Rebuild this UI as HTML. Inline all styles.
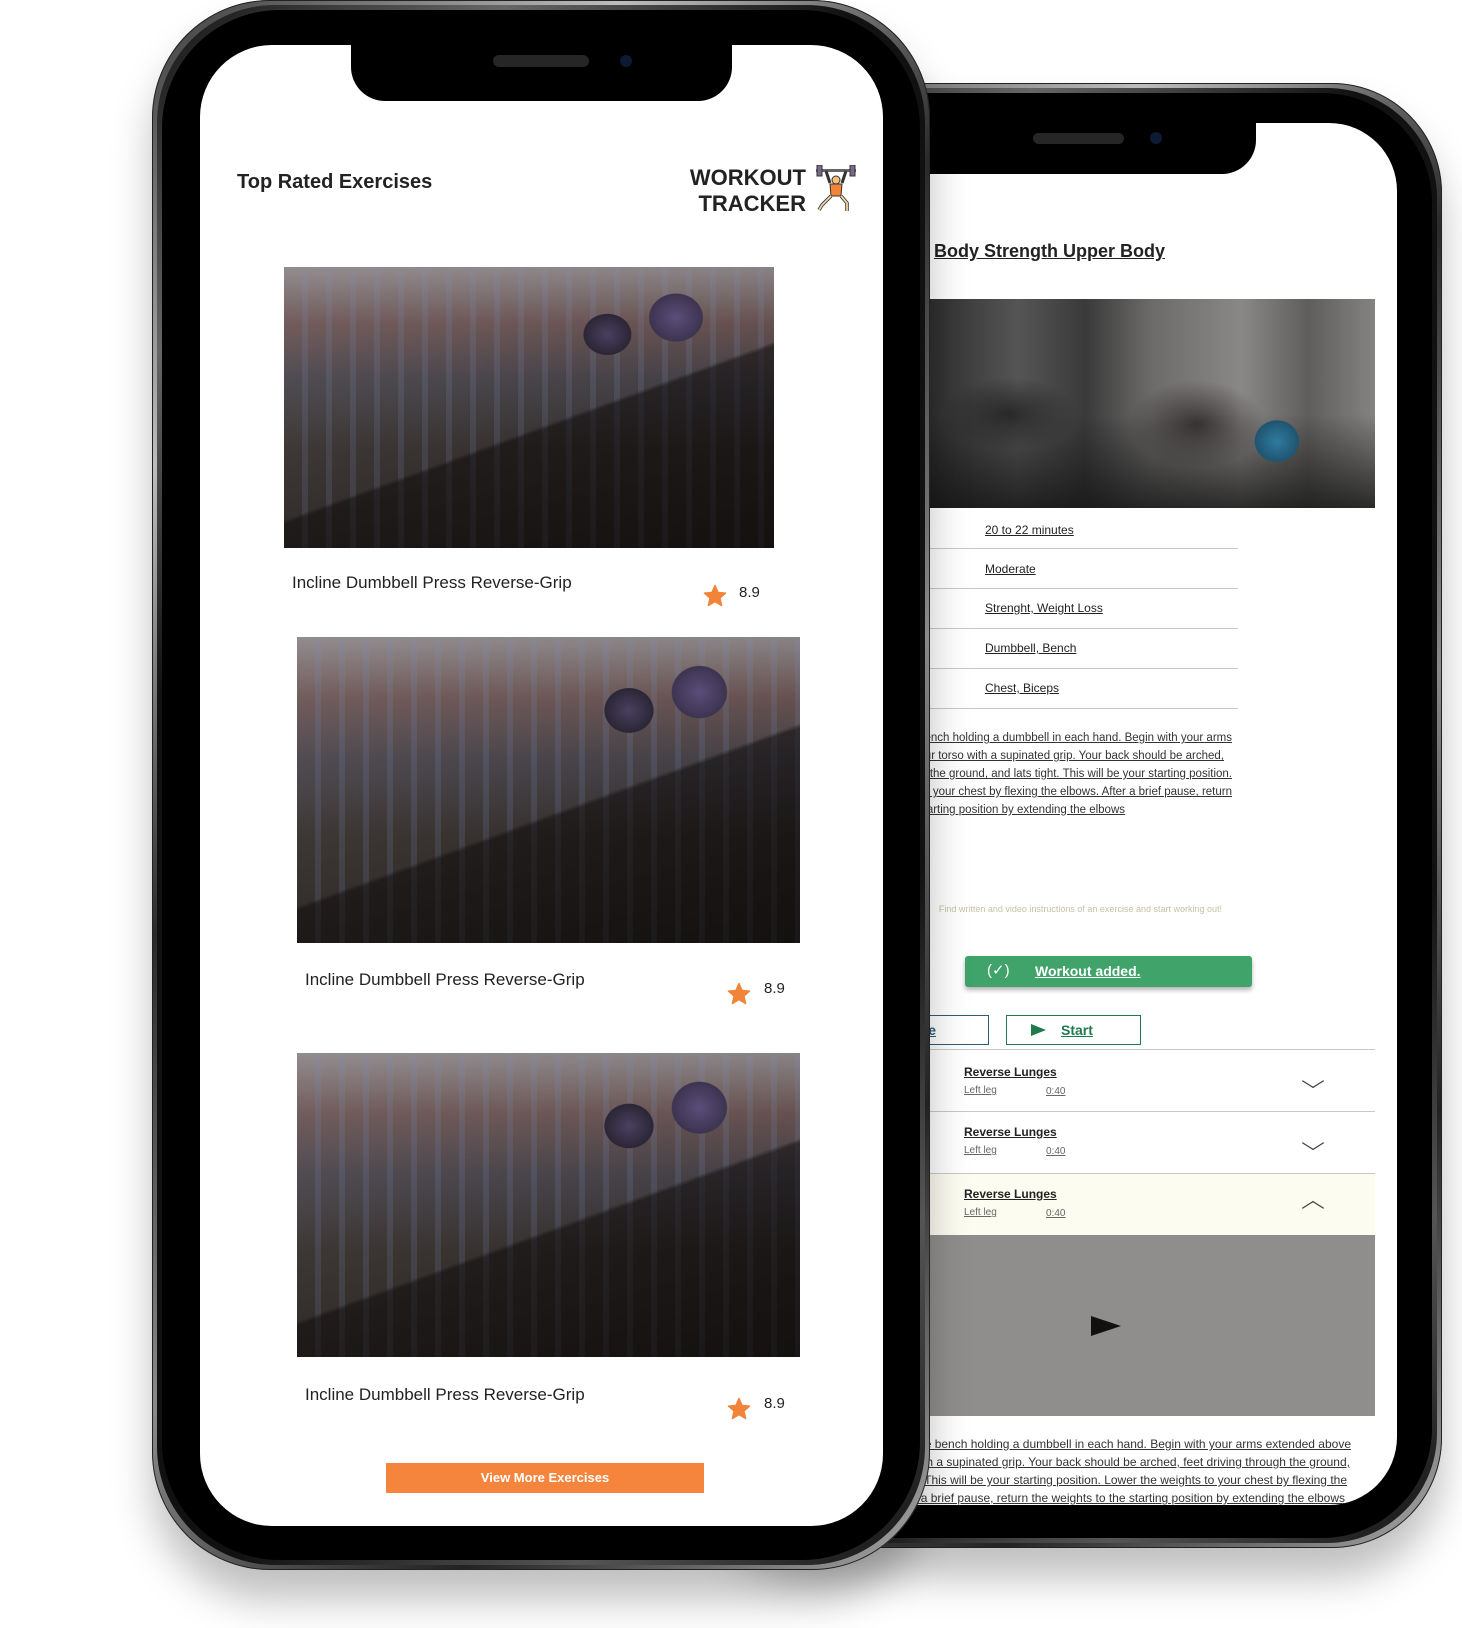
<!DOCTYPE html>
<html><head><meta charset="utf-8"><style>
*{margin:0;padding:0;box-sizing:border-box}
body{width:1462px;height:1628px;background:#fff;position:relative;overflow:hidden;font-family:"Liberation Sans",sans-serif}
.phone{position:absolute;background:linear-gradient(135deg,#3a3a3a,#bdbdbd 20%,#2a2a2a 40%,#8a8a8a 60%,#222 80%,#aaa);box-shadow:0 30px 40px rgba(0,0,0,.25),inset 0 0 0 1px #222}
.phone::before{content:"";position:absolute;inset:5px;border-radius:inherit;background:linear-gradient(135deg,#111,#666 15%,#111 30%,#111 70%,#555 85%,#111);}
.phone::after{content:"";position:absolute;inset:10px;border-radius:inherit;background:#000}
.screen{position:absolute;background:#fff;overflow:hidden;z-index:1}
.notch{position:absolute;background:#000;border-radius:0 0 34px 34px}
.abs{position:absolute;white-space:nowrap}
.u{text-decoration:underline}
.photo{position:absolute;background:
radial-gradient(ellipse 9% 14% at 80% 18%,#5b4d7a 0,#3d3450 60%,transparent 62%),
radial-gradient(ellipse 8% 12% at 66% 24%,#4a4060 0,#2b2636 60%,transparent 62%),
linear-gradient(160deg,transparent 55%,rgba(15,12,12,.55) 56%,rgba(15,12,12,.7) 100%),
repeating-linear-gradient(90deg,rgba(255,255,255,.0) 0 18px,rgba(120,140,180,.18) 18px 24px),
linear-gradient(180deg,rgba(190,185,190,.55) 0%,rgba(150,110,110,.45) 20%,rgba(90,90,110,.35) 40%,rgba(20,18,18,0) 65%),
linear-gradient(165deg,#5e5758 0%,#3d3735 45%,#1f1b1a 100%)}
.row{position:absolute;left:0;height:1px;background:#c8c8c8}
.p{font-size:11.5px;color:#333;text-decoration:underline;text-align:right;white-space:nowrap;position:absolute}
.chev{position:absolute;width:10px;height:10px;border-right:1.3px solid #444;border-bottom:1.3px solid #444;transform:scaleX(1.6) rotate(45deg);z-index:1}
</style></head><body>

<!-- back phone -->
<div class="phone" style="left:700px;top:83px;width:742px;height:1465px;border-radius:110px">
  <div class="screen" style="left:45px;top:40px;width:652px;height:1382px;border-radius:68px">
    <div class="notch" style="left:130px;top:0;width:381px;height:51px"></div>
    <div style="position:absolute;left:288px;top:10px;width:91px;height:11px;border-radius:6px;background:#262626"></div>
    <div style="position:absolute;left:405px;top:9px;width:12px;height:12px;border-radius:6px;background:#0c1a33"></div>
    <div class="abs u" style="left:189px;top:118px;font-size:18px;font-weight:bold;color:#222">Body Strength Upper Body</div>
    <div style="position:absolute;left:184px;top:176px;width:446px;height:209px;background:
      radial-gradient(ellipse 7% 14% at 78% 68%,#2f7aa0 0,#1f5570 70%,transparent 72%),
      radial-gradient(ellipse 22% 30% at 60% 60%,rgba(40,35,35,.8) 0,transparent 70%),
      radial-gradient(ellipse 22% 25% at 18% 55%,rgba(30,30,30,.8) 0,transparent 70%),
      linear-gradient(180deg,transparent 55%,rgba(20,20,20,.8) 100%),
      linear-gradient(90deg,#2e2e2e 0%,#555 20%,#3a3a3a 35%,#6d6b6a 50%,#8a8886 70%,#5f5e5c 85%,#858381 100%)"></div>
    <div class="abs u" style="left:240px;top:400px;font-size:12px;color:#222">20 to 22 minutes</div>
    <div class="row" style="top:425px;left:-100px;width:593px"></div>
    <div class="abs u" style="left:240px;top:439px;font-size:12px;color:#222">Moderate</div>
    <div class="row" style="top:465px;left:-100px;width:593px"></div>
    <div class="abs u" style="left:240px;top:478px;font-size:12px;color:#222">Strenght, Weight Loss</div>
    <div class="row" style="top:505px;left:-100px;width:593px"></div>
    <div class="abs u" style="left:240px;top:518px;font-size:12px;color:#222">Dumbbell, Bench</div>
    <div class="row" style="top:545px;left:-100px;width:593px"></div>
    <div class="abs u" style="left:240px;top:558px;font-size:12px;color:#222">Chest, Biceps</div>
    <div class="row" style="top:585px;left:-100px;width:593px"></div>
    <div class="p" style="right:165px;top:609px">Lie back on an incline bench holding a dumbbell in each hand. Begin with your arms</div>
    <div class="p" style="right:173px;top:627px">extended above your torso with a supinated grip. Your back should be arched,</div>
    <div class="p" style="right:165px;top:645px">feet driving through the ground, and lats tight. This will be your starting position.</div>
    <div class="p" style="right:165px;top:663px">Lower the weights to your chest by flexing the elbows. After a brief pause, return</div>
    <div class="p" style="right:272px;top:681px">the weights to the starting position by extending the elbows</div>
    <div class="p" style="right:175px;top:781px;font-size:9px;color:#c6c2a4;text-decoration:none">Find written and video instructions of an exercise and start working out!</div>
    <div style="position:absolute;left:220px;top:833px;width:287px;height:31px;background:#3fa36a;border-radius:3px;box-shadow:0 3px 5px rgba(0,0,0,.3);color:#fff;font-size:14px;font-weight:bold">
      <span class="abs" style="left:22px;top:5px;font-weight:normal;font-size:15px">(&#10003;)</span>
      <span class="abs u" style="left:70px;top:7px">Workout added.</span></div>
    <div style="position:absolute;left:100px;top:892px;width:144px;height:30px;border:1px solid #2e5d74;color:#2e5d74;font-size:14px;font-weight:bold"><span class="abs u" style="right:52px;top:6px">Schedule</span></div>
    <div style="position:absolute;left:261px;top:892px;width:135px;height:30px;border:1px solid #1f7a4c;color:#1f7a4c;font-size:14px;font-weight:bold">
      <span class="abs" style="left:24px;top:8px;width:0;height:0;border-left:15px solid #1f7a4c;border-top:6px solid transparent;border-bottom:6px solid transparent"></span>
      <span class="abs u" style="left:54px;top:6px">Start</span></div>
    <div class="row" style="top:926px;width:630px"></div>
    <div class="abs u" style="left:219px;top:942px;font-size:12px;font-weight:bold;color:#222">Reverse Lunges</div>
    <div class="abs u" style="left:219px;top:962px;font-size:10px;color:#666">Left leg</div>
    <div class="abs u" style="left:301px;top:963px;font-size:10px;color:#666">0:40</div>
    <div class="row" style="top:988px;width:630px"></div>
    <div class="abs u" style="left:219px;top:1002px;font-size:12px;font-weight:bold;color:#222">Reverse Lunges</div>
    <div class="abs u" style="left:219px;top:1022px;font-size:10px;color:#666">Left leg</div>
    <div class="abs u" style="left:301px;top:1023px;font-size:10px;color:#666">0:40</div>
    <div class="row" style="top:1050px;width:630px"></div>
    <div style="position:absolute;left:0;top:1051px;width:630px;height:61px;background:#fdfcf1"></div>
    <div class="abs u" style="left:219px;top:1064px;font-size:12px;font-weight:bold;color:#222">Reverse Lunges</div>
    <div class="abs u" style="left:219px;top:1084px;font-size:10px;color:#666">Left leg</div>
    <div class="abs u" style="left:301px;top:1085px;font-size:10px;color:#666">0:40</div>
    <div style="position:absolute;left:0;top:1112px;width:630px;height:181px;background:#8f8e8c"></div>
    <div style="position:absolute;left:346px;top:1193px;width:0;height:0;border-left:30px solid #111;border-top:10px solid transparent;border-bottom:10px solid transparent"></div>
    <div class="p" style="right:46px;top:1314px;font-size:12px">position. Lie back on an incline bench holding a dumbbell in each hand. Begin with your arms extended above</div>
    <div class="p" style="right:47px;top:1332px;font-size:12px">your torso with a supinated grip. Your back should be arched, feet driving through the ground,</div>
    <div class="p" style="right:50px;top:1350px;font-size:12px">and lats tight. This will be your starting position. Lower the weights to your chest by flexing the</div>
    <div class="p" style="right:52px;top:1368px;font-size:12px">elbows. After a brief pause, return the weights to the starting position by extending the elbows</div>
  </div>
</div>
<div class="chev" style="left:1308px;top:1076px"></div>
<div class="chev" style="left:1308px;top:1138px"></div>
<div class="chev" style="left:1308px;top:1203px;transform:scaleX(1.6) rotate(225deg)"></div>

<!-- front phone -->
<div class="phone" style="left:152px;top:0;width:778px;height:1570px;border-radius:118px;z-index:2">
  <div class="screen" style="left:48px;top:45px;width:683px;height:1481px;border-radius:72px">
    <div class="notch" style="left:151px;top:0;width:381px;height:56px"></div>
    <div style="position:absolute;left:293px;top:10px;width:96px;height:12px;border-radius:6px;background:#262626"></div>
    <div style="position:absolute;left:420px;top:10px;width:12px;height:12px;border-radius:6px;background:#0c1a33"></div>
    <div class="abs" style="left:37px;top:126px;font-size:20px;font-weight:bold;color:#222">Top Rated Exercises</div>
    <div class="abs" style="right:77px;top:120px;font-size:22px;font-weight:bold;color:#222;text-align:right;line-height:26px">WORKOUT<br>TRACKER</div>
    <svg class="abs" style="left:614px;top:120px" width="44" height="50" viewBox="0 0 44 50">
      <rect x="2" y="4" width="40" height="3" fill="#666"/>
      <rect x="3" y="0" width="5" height="11" fill="#7a6a8a" stroke="#333"/>
      <rect x="36" y="0" width="5" height="11" fill="#7a6a8a" stroke="#333"/>
      <path d="M12 6 L16 18 M32 6 L28 18" stroke="#333" stroke-width="3" fill="none"/>
      <circle cx="22" cy="15" r="4" fill="#f5c27a" stroke="#333"/>
      <path d="M16 19 L28 19 L27 31 L17 31 Z" fill="#f2843a" stroke="#333"/>
      <path d="M17 31 L8 40 L5 45 M27 31 L33 38 L33 46" stroke="#333" stroke-width="3.5" fill="none"/>
      <path d="M17 31 L8 40 L5 45 M27 31 L33 38 L33 46" stroke="#f0d6a8" stroke-width="1.8" fill="none"/>
    </svg>
    <div class="photo" style="left:84px;top:222px;width:490px;height:281px"></div>
    <div class="abs" style="left:92px;top:528px;font-size:17px;color:#222">Incline Dumbbell Press Reverse-Grip</div>
    <svg class="abs" style="left:503px;top:539px" width="24" height="24" viewBox="0 0 24 24"><path d="M12 1.5l3.1 7 7.4.6-5.6 5 1.7 7.4L12 17.6 5.4 21.5l1.7-7.4-5.6-5 7.4-.6z" fill="#f2843a" stroke="#f2843a" stroke-linejoin="round" stroke-width="1.5"/></svg>
    <div class="abs" style="left:539px;top:539px;font-size:15px;color:#222">8.9</div>
    <div class="photo" style="left:97px;top:592px;width:503px;height:306px"></div>
    <div class="abs" style="left:105px;top:925px;font-size:17px;color:#222">Incline Dumbbell Press Reverse-Grip</div>
    <svg class="abs" style="left:527px;top:937px" width="24" height="24" viewBox="0 0 24 24"><path d="M12 1.5l3.1 7 7.4.6-5.6 5 1.7 7.4L12 17.6 5.4 21.5l1.7-7.4-5.6-5 7.4-.6z" fill="#f2843a" stroke="#f2843a" stroke-linejoin="round" stroke-width="1.5"/></svg>
    <div class="abs" style="left:564px;top:935px;font-size:15px;color:#222">8.9</div>
    <div class="photo" style="left:97px;top:1008px;width:503px;height:304px"></div>
    <div class="abs" style="left:105px;top:1340px;font-size:17px;color:#222">Incline Dumbbell Press Reverse-Grip</div>
    <svg class="abs" style="left:527px;top:1352px" width="24" height="24" viewBox="0 0 24 24"><path d="M12 1.5l3.1 7 7.4.6-5.6 5 1.7 7.4L12 17.6 5.4 21.5l1.7-7.4-5.6-5 7.4-.6z" fill="#f2843a" stroke="#f2843a" stroke-linejoin="round" stroke-width="1.5"/></svg>
    <div class="abs" style="left:564px;top:1350px;font-size:15px;color:#222">8.9</div>
    <div style="position:absolute;left:186px;top:1418px;width:318px;height:30px;background:#f5853d;color:#fff;font-size:13px;font-weight:bold;text-align:center;line-height:30px">View More Exercises</div>
  </div>
</div>
</body></html>
